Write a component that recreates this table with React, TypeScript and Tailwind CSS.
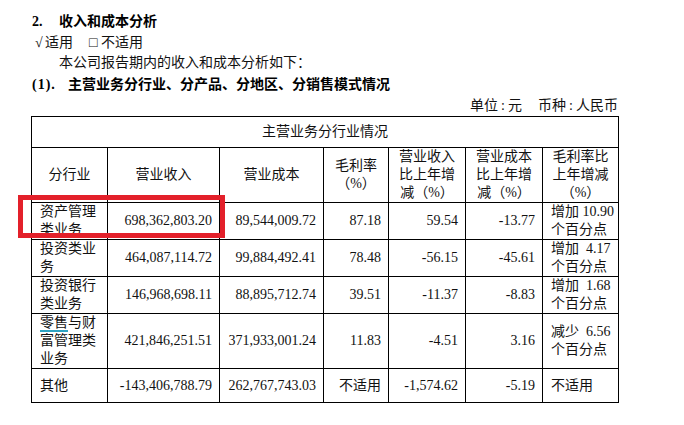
import React from "react";

type Row = {
  name: React.ReactNode;
  revenue: string;
  cost: string;
  margin: string;
  revChange: string;
  costChange: string;
  marginChange: React.ReactNode;
  height: string;
};

const rows: Row[] = [
  {
    name: "资产管理类业务",
    revenue: "698,362,803.20",
    cost: "89,544,009.72",
    margin: "87.18",
    revChange: "59.54",
    costChange: "-13.77",
    marginChange: (
      <>
        增加 10.90
        <br />
        个百分点
      </>
    ),
    height: "h-[37px]"
  },
  {
    name: "投资类业务",
    revenue: "464,087,114.72",
    cost: "99,884,492.41",
    margin: "78.48",
    revChange: "-56.15",
    costChange: "-45.61",
    marginChange: (
      <>
        增加&nbsp;&nbsp;4.17
        <br />
        个百分点
      </>
    ),
    height: "h-[37px]"
  },
  {
    name: "投资银行类业务",
    revenue: "146,968,698.11",
    cost: "88,895,712.74",
    margin: "39.51",
    revChange: "-11.37",
    costChange: "-8.83",
    marginChange: (
      <>
        增加&nbsp;&nbsp;1.68
        <br />
        个百分点
      </>
    ),
    height: "h-[37px]"
  },
  {
    name: (
      <>
        <span className="underline decoration-[#2ea3c2] decoration-2 underline-offset-[3px]">
          零售
        </span>
        与财富管理类业务
      </>
    ),
    revenue: "421,846,251.51",
    cost: "371,933,001.24",
    margin: "11.83",
    revChange: "-4.51",
    costChange: "3.16",
    marginChange: (
      <>
        减少&nbsp;&nbsp;6.56
        <br />
        个百分点
      </>
    ),
    height: "h-[55px]"
  },
  {
    name: "其他",
    revenue: "-143,406,788.79",
    cost: "262,767,743.03",
    margin: "不适用",
    revChange: "-1,574.62",
    costChange: "-5.19",
    marginChange: "不适用",
    height: "h-[34px]"
  }
];

const cell = "border border-black px-[7px] align-middle";

export default function App() {
  return (
    <div
      className="relative w-[684px] h-[425px] overflow-hidden bg-white text-[14px] text-[#111]"
      style={{ fontFamily: "'Liberation Serif', 'Noto Sans CJK SC', serif" }}
    >
      <div className="pt-[12px] pl-[32px]">
        <div className="h-[21px] leading-[20px] font-bold text-black flex">
          <span className="w-[27px]">2.</span>
          <span>收入和成本分析</span>
        </div>
        <div className="h-[20px] leading-[20px] flex pl-[3px]">
          <span className="w-[10px]">√</span>
          <span>适用</span>
          <span className="ml-[16px] w-[12px]">□</span>
          <span>不适用</span>
        </div>
        <div className="h-[22px] leading-[20px] pl-[27px]">
          本公司报告期内的收入和成本分析如下：
        </div>
        <div className="h-[21px] leading-[20px] font-bold text-black flex">
          <span className="w-[36px] tracking-[1px]">(1).</span>
          <span>主营业务分行业、分产品、分地区、分销售模式情况</span>
        </div>
        <div className="h-[20px] leading-[20px] w-[586px] flex justify-end">
          <span>单位</span>
          <span className="w-[10px] text-center">:</span>
          <span>元</span>
          <span className="ml-[16px]">币种</span>
          <span className="w-[10px] text-center">:</span>
          <span>人民币</span>
        </div>
      </div>

      <table className="ml-[31px] w-[587px] table-fixed border-collapse leading-[18px]">
        <colgroup>
          <col className="w-[76px]" />
          <col className="w-[112px]" />
          <col className="w-[104px]" />
          <col className="w-[65px]" />
          <col className="w-[77px]" />
          <col className="w-[77px]" />
          <col className="w-[76px]" />
        </colgroup>
        <tbody>
          <tr className="h-[31px]">
            <td colSpan={7} className={`${cell} text-center`}>
              主营业务分行业情况
            </td>
          </tr>
          <tr className="h-[55px] text-center">
            <td className={cell}>分行业</td>
            <td className={cell}>营业收入</td>
            <td className={cell}>营业成本</td>
            <td className={cell}>
              毛利率
              <br />
              （%）
            </td>
            <td className={`${cell} px-[4px]`}>
              营业收入
              <br />
              比上年增
              <br />
              减（%）
            </td>
            <td className={`${cell} px-[4px]`}>
              营业成本
              <br />
              比上年增
              <br />
              减（%）
            </td>
            <td className={`${cell} px-[4px]`}>
              毛利率比
              <br />
              上年增减
              <br />
              （%）
            </td>
          </tr>
          {rows.map((r, i) => (
            <tr key={i} className={r.height}>
              <td className={`${cell} pl-[8px] pr-[4px] text-left`}>{r.name}</td>
              <td className={`${cell} text-right`}>{r.revenue}</td>
              <td className={`${cell} text-right`}>{r.cost}</td>
              <td className={`${cell} text-right`}>{r.margin}</td>
              <td className={`${cell} text-right`}>{r.revChange}</td>
              <td className={`${cell} text-right`}>{r.costChange}</td>
              <td className={`${cell} pl-[8px] pr-[2px] text-left`}>{r.marginChange}</td>
            </tr>
          ))}
        </tbody>
      </table>

      <div className="mt-[20px] pl-[35px] leading-[20px]">
        主营业务分行业、分产品、分地区、分销售模式情况说明
      </div>

      <div className="absolute left-[18px] top-[195px] w-[207px] h-[43px] border-[5px] border-[#e3202a]" />
    </div>
  );
}
